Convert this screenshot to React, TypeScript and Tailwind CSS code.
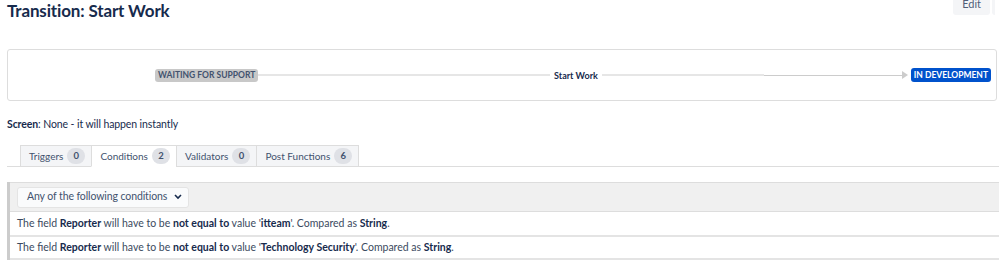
import React from "react";

function Badge({ n }: { n: number }) {
  return (
    <span className="ml-[4px] inline-flex h-[16px] min-w-[18px] items-center justify-center rounded-full bg-[#dfe1e6] px-[5px] text-[9.5px] font-bold text-[#42526e]">
      {n}
    </span>
  );
}

function Tab({ label, n, active }: { label: string; n: number; active?: boolean }) {
  return (
    <div
      className={
        "flex h-[22px] items-center border border-[#dddddd] pl-[8px] pr-[6px] text-[10px] text-[#42526e] -ml-px first:ml-0 " +
        (active ? "bg-white border-b-white" : "bg-[#f4f5f7]")
      }
    >
      {label}
      <Badge n={n} />
    </div>
  );
}

export default function App() {
  return (
    <div
      className="relative h-[271px] w-[999px] overflow-hidden bg-white text-[#172b4d]"
      style={{ fontFamily: 'Lato, "Noto Sans", sans-serif' }}
    >
      {/* Header */}
      <div className="flex h-[49px] items-start justify-between pl-[7px] pr-[4px]">
        <h1 className="mt-[-1px] text-[17px] font-bold leading-[24px] tracking-[-0.15px] text-[#172b4d]">
          Transition: Start Work
        </h1>
        <div className="flex items-start">
          <div className="mt-[-7px] flex h-[22px] items-center rounded-[3px] bg-[#f4f5f7] px-[9px] text-[11px] text-[#505f79]">
            Edit
          </div>
          <div className="ml-[2px] mt-[-7px] h-[22px] w-[3px] rounded-l-[3px] bg-[#f4f5f7]" />
        </div>
      </div>

      {/* Diagram box */}
      <div className="ml-[7px] mr-[2px] flex h-[52px] items-center rounded-[3px] border border-[#dddddd] pl-[147px] pr-[5px]">
        <span className="flex h-[13px] items-center rounded-[3px] bg-[#c8c8c8] px-[3px] text-[8.5px] font-bold uppercase leading-none text-[#42526e]">
          Waiting for Support
        </span>
        <div className="h-[2px] flex-1 bg-[#e6e6e6]" />
        <span className="px-[4px] text-[9px] font-bold leading-none text-[#172b4d]">Start Work</span>
        <div className="h-[2px] w-[162px] bg-[#e6e6e6]" />
        <div className="h-px w-[138px] bg-[#cccccc]" />
        <svg width="6" height="8" viewBox="0 0 6 8" className="mr-[3px]">
          <path d="M0 0 L6 4 L0 8 Z" fill="#cccccc" />
        </svg>
        <span className="flex h-[14px] items-center rounded-[3px] bg-[#0052cc] px-[3px] text-[8.5px] font-bold uppercase leading-none text-white">
          In Development
        </span>
      </div>

      {/* Screen */}
      <div className="ml-[7px] mt-[16px] text-[10.5px] leading-[14px] tracking-[-0.1px] text-[#172b4d]">
        <span className="font-bold">Screen</span>: None - it will happen instantly
      </div>

      {/* Tabs */}
      <div className="ml-[7px] mt-[14px] flex border-b border-[#dddddd] pl-[13px]">
        <div className="-mb-px flex">
          <Tab label="Triggers" n={0} />
          <Tab label="Conditions" n={2} active />
          <Tab label="Validators" n={0} />
          <Tab label="Post Functions" n={6} />
        </div>
      </div>

      {/* Conditions panel */}
      <div className="ml-[7px] mt-[15px] border-l-[3px] border-[#cccccc] text-[10.5px]">
        <div className="flex h-[30px] items-center border-y border-[#dddddd] bg-[#f0f0f0] pl-[7px]">
          <div className="flex h-[21px] items-center rounded-[3px] border border-[#e4e4e4] bg-[#fafbfc] pl-[9px] pr-[6px] text-[10.5px] tracking-[-0.1px] text-[#42526e]">
            Any of the following conditions
            <svg width="8" height="6" viewBox="0 0 8 6" className="ml-[7px]">
              <path d="M1 1 L4 4 L7 1" fill="none" stroke="#172b4d" strokeWidth="1.6" />
            </svg>
          </div>
        </div>
        <div className="flex h-[25px] items-center border-b-2 border-[#e4e4e4] pl-[7px] text-[#3b4a60]">
          <span>
            The field <b className="text-[#172b4d]">Reporter</b> will have to be{" "}
            <b className="text-[#172b4d]">not equal to</b> value '<b className="text-[#172b4d]">itteam</b>'. Compared as{" "}
            <b className="text-[#172b4d]">String</b>.
          </span>
        </div>
        <div className="flex h-[23px] items-center border-b-2 border-[#e4e4e4] pl-[7px] text-[#3b4a60]">
          <span>
            The field <b className="text-[#172b4d]">Reporter</b> will have to be{" "}
            <b className="text-[#172b4d]">not equal to</b> value '<b className="text-[#172b4d]">Technology Security</b>'.
            Compared as <b className="text-[#172b4d]">String</b>.
          </span>
        </div>
      </div>
    </div>
  );
}
